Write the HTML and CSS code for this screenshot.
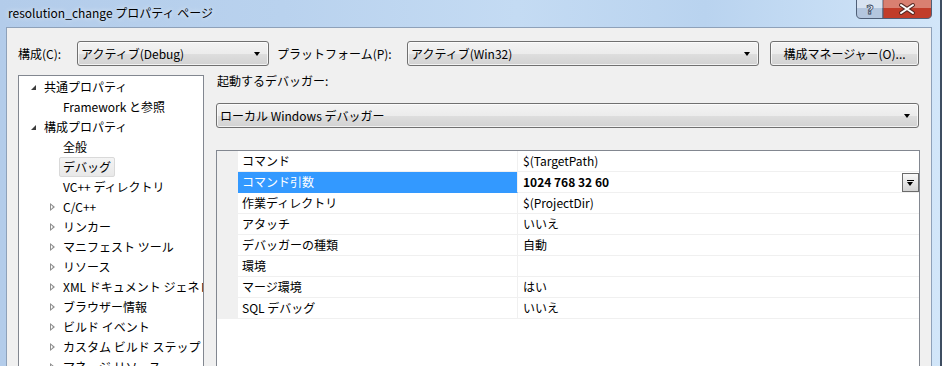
FILE: index.html
```html
<!DOCTYPE html>
<html lang="ja">
<head>
  <meta charset="UTF-8" />
  <title>resolution_change プロパティ ページ</title>
  <link rel="stylesheet" href="styles.css">
</head>
<body>
  <div class="window">
    <div class="titlebar">
      <span class="title">resolution_change プロパティ ページ</span>
      <div class="caption-buttons">
        <svg class="caption-svg" width="76" height="19" viewBox="0 0 76 19">
          <path d="M0.5 0 V14 Q0.5 18.5 5 18.5 H27 V0 Z" fill="#b4c6de" stroke="#4f5f77"/>
          <rect x="1" y="0" width="26" height="8" fill="#d8e3f1"/>
          <path d="M27 0 V18.5 H71 Q75.5 18.5 75.5 14 V0 Z" fill="#c13c29" stroke="#4f5f77"/>
          <rect x="27.5" y="0" width="47.5" height="8" fill="#d98071"/>
          <text x="14" y="14" text-anchor="middle" font-family="DejaVu Sans, sans-serif" font-size="13" font-weight="bold" fill="#eef2f7" stroke="#34445a" stroke-width="0.8">?</text>
          <path d="M45 5 L57 13 M57 5 L45 13" stroke="#5a2a24" stroke-width="4" stroke-linecap="round"/>
          <path d="M45 5 L57 13 M57 5 L45 13" stroke="#fff" stroke-width="2" stroke-linecap="round"/>
        </svg>
      </div>
    </div>

    <div class="client">
      <div class="toolbar">
        <label class="field-label label-config">構成(C):</label>
        <div class="combo combo-config">アクティブ(Debug)<span class="arrow"></span></div>
        <label class="field-label label-platform">プラットフォーム(P):</label>
        <div class="combo combo-platform">アクティブ(Win32)<span class="arrow"></span></div>
        <button class="btn">構成マネージャー(O)...</button>
      </div>

      <div class="main">
        <div class="tree">
          <div class="tree-item lvl0"><span class="toggle open"></span><span class="node">共通プロパティ</span></div>
          <div class="tree-item lvl1"><span class="toggle"></span><span class="node">Framework と参照</span></div>
          <div class="tree-item lvl0"><span class="toggle open"></span><span class="node">構成プロパティ</span></div>
          <div class="tree-item lvl1"><span class="toggle"></span><span class="node">全般</span></div>
          <div class="tree-item lvl1"><span class="toggle"></span><span class="node selected">デバッグ</span></div>
          <div class="tree-item lvl1"><span class="toggle"></span><span class="node">VC++ ディレクトリ</span></div>
          <div class="tree-item lvl1"><span class="toggle closed"></span><span class="node">C/C++</span></div>
          <div class="tree-item lvl1"><span class="toggle closed"></span><span class="node">リンカー</span></div>
          <div class="tree-item lvl1"><span class="toggle closed"></span><span class="node">マニフェスト ツール</span></div>
          <div class="tree-item lvl1"><span class="toggle closed"></span><span class="node">リソース</span></div>
          <div class="tree-item lvl1"><span class="toggle closed"></span><span class="node">XML ドキュメント ジェネレーター</span></div>
          <div class="tree-item lvl1"><span class="toggle closed"></span><span class="node">ブラウザー情報</span></div>
          <div class="tree-item lvl1"><span class="toggle closed"></span><span class="node">ビルド イベント</span></div>
          <div class="tree-item lvl1"><span class="toggle closed"></span><span class="node">カスタム ビルド ステップ</span></div>
          <div class="tree-item lvl1"><span class="toggle closed"></span><span class="node">マネージ リソース</span></div>
        </div>

        <div class="page">
          <div class="page-label">起動するデバッガー:</div>
          <div class="combo combo-debugger">ローカル Windows デバッガー<span class="arrow"></span></div>

          <div class="propgrid">
            <div class="prop-row"><div class="gutter"></div><div class="prop-name">コマンド</div><div class="prop-value">$(TargetPath)</div></div>
            <div class="prop-row active"><div class="gutter"></div><div class="prop-name">コマンド引数</div><div class="prop-value">1024 768 32 60<span class="drop"></span></div></div>
            <div class="prop-row"><div class="gutter"></div><div class="prop-name">作業ディレクトリ</div><div class="prop-value">$(ProjectDir)</div></div>
            <div class="prop-row"><div class="gutter"></div><div class="prop-name">アタッチ</div><div class="prop-value">いいえ</div></div>
            <div class="prop-row"><div class="gutter"></div><div class="prop-name">デバッガーの種類</div><div class="prop-value">自動</div></div>
            <div class="prop-row"><div class="gutter"></div><div class="prop-name">環境</div><div class="prop-value"></div></div>
            <div class="prop-row"><div class="gutter"></div><div class="prop-name">マージ環境</div><div class="prop-value">はい</div></div>
            <div class="prop-row"><div class="gutter"></div><div class="prop-name">SQL デバッグ</div><div class="prop-value">いいえ</div></div>
          </div>
        </div>
      </div>
    </div>
  </div>
</body>
</html>
```

FILE: styles.css
```css
* {
  box-sizing: border-box;
}

body {
  margin: 0;
  font-family: "Noto Sans CJK JP", sans-serif;
  font-size: 12px;
  color: #000;
  background: #fff;
}

.window {
  width: 942px;
  height: 366px;
  overflow: hidden;
  display: flex;
  flex-direction: column;
  background: linear-gradient(90deg, #b3ccea 0%, #b9d2ee 30%, #c4dbf3 55%, #b9d3ef 75%, #d2e6f9 100%);
  border-right: 2px solid #3e4d61;
}

.titlebar {
  height: 27px;
  flex-shrink: 0;
  display: flex;
  align-items: flex-start;
  padding-left: 8px;
}

.title {
  line-height: 26px;
  text-shadow: 0 0 5px rgba(255, 255, 255, 0.9);
}

.caption-buttons {
  margin-left: auto;
  margin-right: 8px;
  display: flex;
}

.caption-svg {
  display: block;
}

.client {
  flex: 1;
  margin: 0 8px 0 6px;
  background: #f0f0f0;
  border: 1px solid #8ea1b9;
  border-bottom: none;
  padding: 13px 11px 0 11px;
}

/* top row */
.toolbar {
  display: flex;
  align-items: center;
  height: 25px;
}

.field-label {
  line-height: 25px;
}

.label-config {
  width: 59px;
}

.label-platform {
  width: 130px;
  margin-left: 8px;
}

.combo {
  position: relative;
  height: 25px;
  line-height: 23px;
  padding-left: 3px;
  border: 1px solid #707070;
  border-radius: 3px;
  background: linear-gradient(#f3f3f3 0%, #ececec 50%, #dedede 51%, #d2d2d2 100%);
  box-shadow: inset 0 0 0 1px rgba(255, 255, 255, 0.7);
  white-space: nowrap;
}

.combo .arrow {
  position: absolute;
  right: 8px;
  top: 10px;
  border-left: 3.5px solid transparent;
  border-right: 3.5px solid transparent;
  border-top: 4px solid #000;
}

.combo-config {
  width: 192px;
}

.combo-platform {
  width: 352px;
}

.btn {
  width: 149px;
  height: 25px;
  margin-left: 11px;
  padding: 0;
  font-family: inherit;
  font-size: 12px;
  color: #000;
  border: 1px solid #707070;
  border-radius: 3px;
  background: linear-gradient(#f3f3f3 0%, #ececec 50%, #dedede 51%, #d2d2d2 100%);
  box-shadow: inset 0 0 0 1px rgba(255, 255, 255, 0.7);
}

/* body */
.main {
  display: grid;
  grid-template-columns: 186px 704px;
  column-gap: 12px;
  margin-top: 9px;
  align-items: start;
}

.tree {
  background: #fff;
  border: 1px solid #828790;
  padding-top: 1px;
  height: 320px;
  overflow: hidden;
  white-space: nowrap;
}

.tree-item {
  display: flex;
  align-items: center;
  height: 20px;
}

.tree-item.lvl0 {
  padding-left: 11px;
}

.tree-item.lvl1 {
  padding-left: 30px;
}

.toggle {
  position: relative;
  width: 10px;
  height: 20px;
  flex-shrink: 0;
}

.toggle.open::before {
  content: "";
  position: absolute;
  left: 1px;
  top: 8px;
  border-left: 5px solid transparent;
  border-bottom: 5px solid #3c3c3c;
}

.toggle.closed::before {
  content: "";
  position: absolute;
  left: 1px;
  top: 6px;
  width: 0;
  height: 0;
  border-top: 4px solid transparent;
  border-bottom: 4px solid transparent;
  border-left: 5px solid #8e8e8e;
}

.toggle.closed::after {
  content: "";
  position: absolute;
  left: 2px;
  top: 8px;
  border-top: 2px solid transparent;
  border-bottom: 2px solid transparent;
  border-left: 2.5px solid #fff;
}

.node {
  padding: 0 3px;
  height: 20px;
  line-height: 18px;
  border: 1px solid transparent;
  border-radius: 2px;
}

.node.selected {
  border-color: #d9d9d9;
  background: linear-gradient(#f4f4f4, #e8e8e8);
}

.page-label {
  line-height: 12px;
  height: 12px;
  padding-left: 1px;
}

.combo-debugger {
  margin-top: 16px;
  width: 703px;
}

.propgrid {
  margin-top: 22px;
  width: 704px;
  height: 230px;
  background: #fff;
  border: 1px solid #828790;
}

.prop-row {
  display: flex;
  height: 21px;
}

.gutter {
  width: 21px;
  background: #f0f0f0;
}

.prop-name {
  width: 280px;
  padding-left: 4px;
  line-height: 20px;
  border-right: 1px solid #f0f0f0;
  border-bottom: 1px solid #f0f0f0;
}

.prop-value {
  position: relative;
  flex: 1;
  padding-left: 5px;
  line-height: 20px;
  border-bottom: 1px solid #f0f0f0;
}

.prop-row.active .prop-name {
  background: #3399ff;
  color: #fff;
  border-bottom-color: #3399ff;
}

.prop-row.active .prop-value {
  font-weight: bold;
}

.drop {
  position: absolute;
  right: 0;
  top: 1px;
  width: 17px;
  height: 19px;
  border: 1px solid #6b6b6b;
  background: linear-gradient(#fafafa, #e6e6e6 50%, #d4d4d4);
}

.drop::before {
  content: "";
  position: absolute;
  left: 4px;
  top: 8px;
  border-left: 3.5px solid transparent;
  border-right: 3.5px solid transparent;
  border-top: 4px solid #000;
}

.drop::after {
  content: "";
  position: absolute;
  left: 4px;
  top: 6px;
  width: 7px;
  height: 1px;
  background: #000;
}
```
